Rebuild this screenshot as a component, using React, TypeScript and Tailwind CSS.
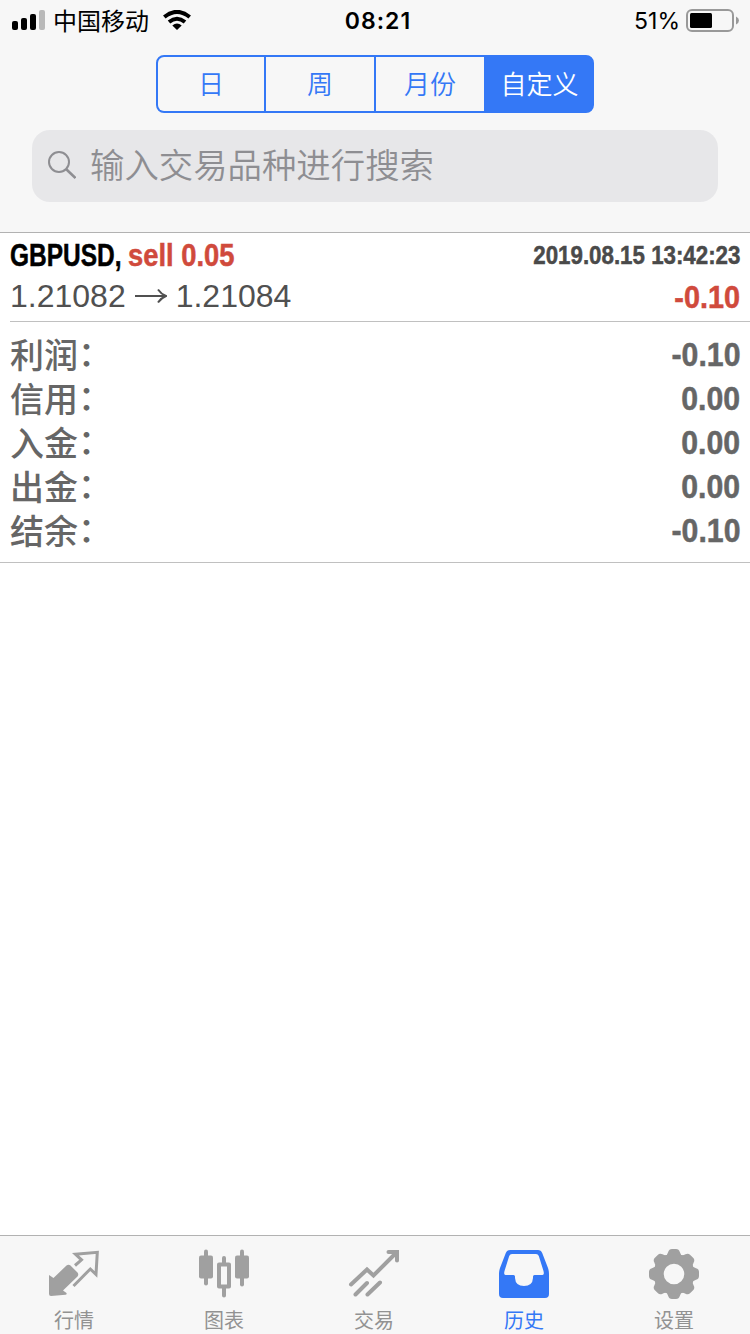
import React from 'react'

const PERIODS = [
    { label: '日', style: 'w-[108px] border-r-2' },
    { label: '周', style: 'w-[110px] border-r-2' },
    { label: '月份', style: 'w-[108px]' },
    { label: '自定义', style: 'w-[108px] pl-[3px]', active: true },
]

const SUMMARY = [
    { label: '利润', value: '-0.10' },
    { label: '信用', value: '0.00' },
    { label: '入金', value: '0.00' },
    { label: '出金', value: '0.00' },
    { label: '结余', value: '-0.10' },
]

function QuotesIcon() {
    return (
        <svg viewBox="0 0 52 50" className="h-[50px] w-[52px]">
            <path d="M1 26 5.500 29 18.500 16.500Q20.500 15 22.500 16.500L29.500 23.500Q31 25.500 29.500 27.500L15 41.500 18.500 44Q19 45.500 17.500 45.700L3 47Q1 47 1 45Z" fill="currentColor" />
            <path d="M27 16.500 33.500 10.800 27.500 5.300 49.300 3.300 48 25.500 42.300 20 25.500 37" fill="none" stroke="currentColor" strokeWidth="3" />
        </svg>
    )
}

function ChartIcon() {
    return (
        <svg viewBox="0 0 52 50" className="h-[50px] w-[52px]" fill="currentColor">
            <rect x="1" y="6.500" width="14" height="23" rx="2" />
            <rect x="6" y="0.500" width="4" height="36" rx="2" />
            <rect x="37" y="6.500" width="14" height="23" rx="2" />
            <rect x="42" y="0.500" width="4" height="37" rx="2" />
            <path fillRule="evenodd" d="M21 13.500h10a2 2 0 0 1 2 2v22a2 2 0 0 1-2 2H21a2 2 0 0 1-2-2V15.500a2 2 0 0 1 2-2Zm2 4v18h6V17.500Z" />
            <path d="M24 14.500V9a2 2 0 0 1 4 0V14.500ZM24 38.500v8a2 2 0 0 0 4 0v-8Z" />
        </svg>
    )
}

function TradeIcon() {
    return (
        <svg viewBox="0 0 52 50" className="h-[50px] w-[52px]" fill="none" stroke="currentColor" strokeWidth="4" strokeLinecap="round">
            <path d="M3 35.500 19 20.500 25.500 26.500 48 4M7.500 45.500 19 34M19.500 45.500 32 33.500" />
            <path d="M40.500 3H49V11.500" />
        </svg>
    )
}

function HistoryIcon() {
    return (
        <svg viewBox="0 0 52 50" className="h-[50px] w-[52px]" fill="currentColor">
            <path
                fillRule="evenodd"
                d="M12 1H40Q43 1 44.200 4L50 19Q51 22 51 25V45Q51 49 47 49H5Q1 49 1 45V25Q1 22 2 19L7.800 4Q9 1 12 1ZM14 5Q12 5 11.200 7L6.500 22Q5.500 26 7.500 26H15.500Q17 26 17 27.500V29Q17.500 37 26 37Q34.500 37 35 29V27.500Q35 26 36.500 26H44.500Q46.500 26 45.500 22L40.800 7Q40 5 38 5Z"
            />
        </svg>
    )
}

function SettingsIcon() {
    return (
        <svg viewBox="0 0 52 50" className="h-[50px] w-[52px]">
            <g transform="translate(26 25)" fill="currentColor">
                {[0, 45, 90, 135, 180, 225, 270, 315].map((angle) => (
                    <path key={angle} d="M-9 -18Q-6.500 -19-5.800 -22Q-5 -25-2 -25H2Q5 -25 5.800 -22Q6.500 -19 9 -18L7 -14H-7Z" transform={`rotate(${angle})`} />
                ))}
                <circle r="15.300" fill="none" stroke="currentColor" strokeWidth="10" />
            </g>
        </svg>
    )
}

const TABS = [
    { label: '行情', icon: QuotesIcon },
    { label: '图表', icon: ChartIcon },
    { label: '交易', icon: TradeIcon },
    { label: '历史', icon: HistoryIcon, active: true },
    { label: '设置', icon: SettingsIcon },
]

function StatusBar() {
    return (
        <div className="grid h-10 grid-cols-3 items-center pr-[11px] pl-3 text-black">
            <div className="flex items-center">
                <svg viewBox="0 0 33 20" className="h-5 w-[33px]">
                    <rect x="0" y="11" width="6" height="9" rx="2" />
                    <rect x="9" y="8" width="6" height="12" rx="2" />
                    <rect x="18" y="4" width="6" height="16" rx="2" />
                    <rect x="27" y="0" width="6" height="20" rx="2" fill="#b9b9b9" />
                </svg>
                <span className="ml-2 pt-[3px] text-2xl leading-9">中国移动</span>
                <svg viewBox="0 0 28 20" className="ml-3.5 h-5 w-7" fill="none" stroke="black" strokeWidth="4">
                    <path d="M1.300 7Q14-3.300 26.700 7" />
                    <path d="M6 12Q14 5.600 22 12" />
                    <path d="M9.300 15.500Q14 11.500 18.700 15.500L14 20Z" fill="black" stroke="none" />
                </svg>
            </div>
            <div className="pt-0.5 pl-[5px] text-center font-[Inter] text-[23px] font-semibold tracking-[1px]">08:21</div>
            <div className="flex items-center justify-end">
                <span className="pt-0.5 font-[Inter] text-[23px]">51%</span>
                <svg viewBox="0 0 53 24" className="ml-1.5 h-6 w-[53px]">
                    <rect x="1" y="2" width="46" height="21" rx="5" fill="none" stroke="#999" strokeWidth="2" />
                    <rect x="4" y="5" width="22" height="15" rx="1.500" />
                    <path d="M50 8.500Q53 10 53 12.500T50 16.500Z" fill="#999" />
                </svg>
            </div>
        </div>
    )
}

export default function App() {
    return (
        <div className="flex h-[1334px] w-[750px] flex-col overflow-hidden bg-white font-['Liberation_Sans','Noto_Sans_CJK_SC',sans-serif]">
            {/* Header */}
            <header className="h-[233px] shrink-0 border-b border-[#b2b2b2] bg-[#f7f7f7]">
                <StatusBar />
                <div className="mx-auto mt-[15px] flex h-[58px] w-[438px] overflow-hidden rounded-lg border-2 border-[#3478f6] bg-[#3478f6]">
                    {PERIODS.map(({ label, style, active }) => (
                        <div
                            key={label}
                            className={`flex items-center justify-center border-[#3478f6] pt-[3px] text-[26px] font-[350] ${style} ${active ? 'text-white' : 'bg-[#f7f7f7] text-[#3478f6]'}`}
                        >
                            {label}
                        </div>
                    ))}
                </div>
                <div className="mx-8 mt-[17px] flex h-[72px] items-center rounded-[18px] bg-[#e7e7e9] pl-4 text-[#8e8e92]">
                    <svg viewBox="0 0 28 28" className="mb-0.5 h-7 w-7" fill="none" stroke="currentColor" strokeWidth="2">
                        <circle cx="11" cy="11" r="10" />
                        <path d="M18 18 27.500 27" strokeWidth="2.600" />
                    </svg>
                    <span className="ml-3.5 text-[34.400px] leading-none font-[350]">输入交易品种进行搜索</span>
                </div>
            </header>

            {/* Deal */}
            <section className="ml-2.5 h-[89px] shrink-0 border-b border-[#c0c0c0] pr-2.5">
                <div className="flex h-[44px] items-center justify-between font-bold whitespace-nowrap [-webkit-text-stroke:0.5px]">
                    <div className="flex text-[32px] leading-[44px]">
                        <span className="w-[118px] origin-left scale-x-[0.765] text-black">GBPUSD,</span>
                        <span className="origin-left scale-x-[0.855] text-[#d04a3c]">sell 0.05</span>
                    </div>
                    <span className="origin-right scale-x-[0.858] text-[26px] text-[#4a4a4a]">2019.08.15 13:42:23</span>
                </div>
                <div className="flex h-10 items-center justify-between text-[32px]">
                    <div className="flex items-center pb-0.5 text-[#505050]">
                        <span>1.21082</span>
                        <svg viewBox="0 0 32 16" className="mx-[9px] h-4 w-8" fill="none" stroke="currentColor" strokeWidth="2">
                            <path d="M0 8H30M23 1.500Q26 6 31 8Q26 10 23 14.500" />
                        </svg>
                        <span>1.21084</span>
                    </div>
                    <span className="origin-right scale-x-[0.9] font-bold text-[#d04a3c] [-webkit-text-stroke:0.5px]">-0.10</span>
                </div>
            </section>

            {/* Totals */}
            <section className="h-[241px] shrink-0 border-b border-[#c0c0c0] px-2.5 pt-2.5 text-[34px] text-[#666]">
                {SUMMARY.map(({ label, value }) => (
                    <div key={label} className="flex h-[44px] items-center justify-between">
                        <div className="flex pt-[3px] leading-[44px] font-medium">
                            <span>{label}</span>
                            <span className="-mt-0.5">：</span>
                        </div>
                        <span className="origin-right scale-x-[0.89] font-bold [-webkit-text-stroke:0.5px]">{value}</span>
                    </div>
                ))}
            </section>

            {/* Tab bar */}
            <nav className="mt-auto h-[99px] border-t border-[#b2b2b2] bg-[#f7f7f7]">
                <div className="mr-px -ml-px grid grid-cols-5 pt-[13px]">
                    {TABS.map(({ label, icon: Icon, active }) => (
                        <div key={label} className={`flex flex-col items-center ${active ? 'text-[#3478f6]' : 'text-[#a0a0a0]'}`}>
                            <Icon />
                            <span className={`mt-2 text-xl leading-[28px] ${active ? 'text-[#3478f6]' : 'text-[#929292]'}`}>{label}</span>
                        </div>
                    ))}
                </div>
            </nav>
        </div>
    )
}
